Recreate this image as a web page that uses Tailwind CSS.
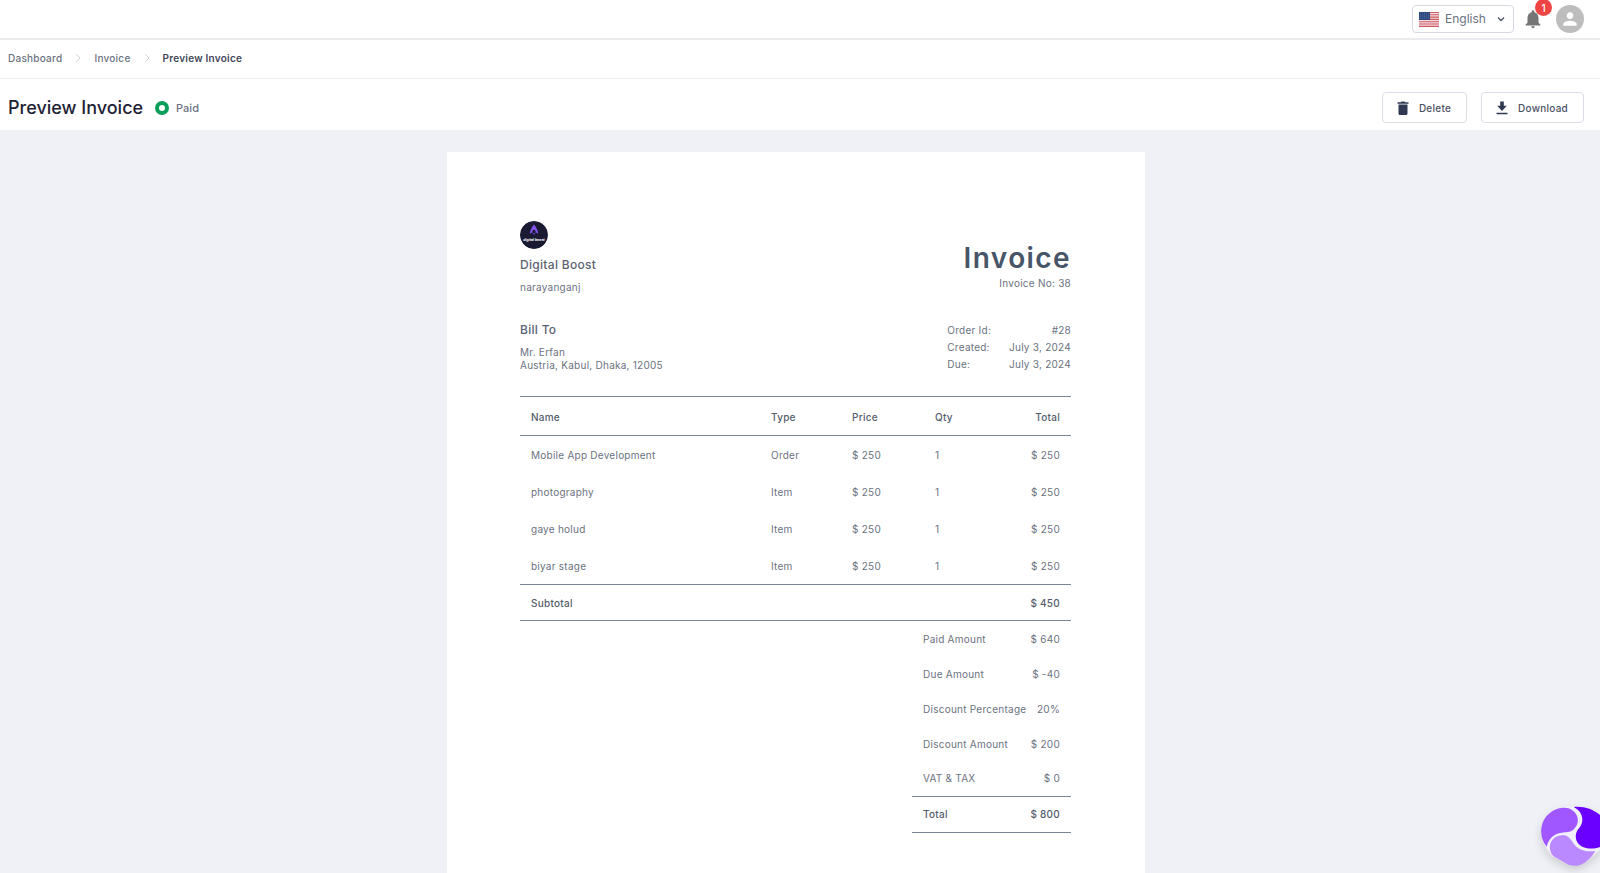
<!DOCTYPE html>
<html lang="en">
  <head>
    <meta charset="UTF-8" />
    <meta name="viewport" content="width=device-width, initial-scale=1.0" />
    <title>Preview Invoice</title>
    <script src="https://cdn.jsdelivr.net/npm/@tailwindcss/browser@4"></script>
  </head>

  <body class="flex min-h-screen flex-col bg-[#f0f1f7] font-['Inter','Liberation_Sans',sans-serif] text-[10px] leading-4 tracking-wide text-[#6b7280]">
    <!-- Top bar -->
    <header class="flex h-10 items-center justify-end border-b-2 border-[#ebebed] bg-white pr-4">
      <div class="flex h-7 items-center rounded border border-[#d5d9e2] pl-1.5 pr-2">
        <svg class="h-[15px] w-5" viewBox="0 0 20 15" aria-hidden="true">
          <rect width="20" height="15" fill="#f3dcdf" />
          <path d="M0 .5h20M0 2.8h20M0 5.1h20M0 7.4h20M0 9.7h20M0 12h20M0 14.4h20" stroke="#cf5a64" stroke-width="1.1" />
          <rect width="11" height="8" fill="#2f4a80" />
          <path d="M1 2h9M1 4h9M1 6h9" stroke="#6b80a8" stroke-width=".6" stroke-dasharray="1 1" />
        </svg>
        <select aria-label="Language" class="ml-1.5 w-[46px] appearance-none bg-transparent text-xs leading-5 tracking-normal text-[#6b7280]">
          <option>English</option>
        </select>
        <svg class="ml-1.5 h-2 w-2" viewBox="0 0 8 8" fill="none" stroke="#4b5563" stroke-width="1.3" aria-hidden="true"><path d="M1 2.5l3 3 3-3" /></svg>
      </div>
      <button type="button" aria-label="Notifications" class="relative ml-2 h-6 w-6">
        <svg viewBox="0 0 24 24" fill="#757575" class="h-[22px] w-[22px]"><path d="M12 22c1.1 0 2-.9 2-2h-4c0 1.100.89 2 2 2zm6-6v-5c0-3.070-1.640-5.640-4.500-6.320V4c0-.83-.67-1.500-1.500-1.500s-1.500.67-1.500 1.500v.68C7.630 5.360 6 7.920 6 11v5l-2 2v1h16v-1l-2-2z" /></svg>
        <span class="absolute -top-2 -right-1.5 flex h-[17px] w-[17px] items-center justify-center rounded-full bg-[#ef4444] leading-none font-medium tracking-normal text-white">1</span>
      </button>
      <button type="button" aria-label="Account" class="ml-2.5 flex h-7 w-7 items-center justify-center rounded-full bg-[#bdbdbd]">
        <svg viewBox="0 0 24 24" fill="#fff" class="h-5 w-5"><path d="M12 12c2.210 0 4-1.790 4-4s-1.790-4-4-4-4 1.790-4 4 1.790 4 4 4zm0 2c-2.670 0-8 1.340-8 4v2h16v-2c0-2.660-5.330-4-8-4z" /></svg>
      </button>
    </header>

    <!-- Breadcrumb -->
    <nav aria-label="Breadcrumb" class="flex h-[39px] items-center border-b border-[#f0f1f5] bg-white px-2 pb-0.5 font-medium">
      <a href="#">Dashboard</a>
      <svg class="mx-3 h-2 w-2" viewBox="0 0 8 8" fill="none" stroke="#cfd3dc" aria-hidden="true"><path d="M2 0l4 4-4 4" /></svg>
      <a href="#">Invoice</a>
      <svg class="mx-3 h-2 w-2" viewBox="0 0 8 8" fill="none" stroke="#cfd3dc" aria-hidden="true"><path d="M2 0l4 4-4 4" /></svg>
      <span class="font-semibold text-[#3f4657]">Preview Invoice</span>
    </nav>

    <!-- Page title and actions -->
    <div class="flex h-[51px] items-center bg-white pl-2 pr-4 pt-1.5">
      <h1 class="text-lg font-medium tracking-normal text-[#1e2235]">Preview Invoice</h1>
      <span class="ml-3 h-3.5 w-3.5 rounded-full border-4 border-[#0a9f5b]"></span>
      <span class="ml-[7px] text-[11px] font-medium tracking-normal">Paid</span>
      <div class="ml-auto flex gap-3.5 font-medium text-[#4b5163]">
        <button type="button" class="flex h-[31px] items-center rounded border border-[#d9dde6] pl-3 pr-[15px]">
          <svg class="mr-2 h-4 w-4" viewBox="0 0 16 16" fill="#2f3a52" aria-hidden="true"><path d="M3.500 4.500h9v9a1.500 1.500 0 0 1-1.500 1.500H5a1.500 1.500 0 0 1-1.500-1.500zM2.500 2.300h3.300L6.500 1.500h3l.7.800h3.300v1.500h-11z" /></svg>
          Delete
        </button>
        <button type="button" class="flex h-[31px] items-center rounded border border-[#d9dde6] pl-3 pr-[15px]">
          <svg class="mr-2 h-4 w-4" viewBox="0 0 16 16" fill="#2f3a52" aria-hidden="true"><path d="M6.200 1.500h3.600v4.300h3L8 11 3.200 5.800h3zM2.500 12.800h11v1.500h-11z" /></svg>
          Download
        </button>
      </div>
    </div>

    <!-- Invoice sheet -->
    <main class="flex flex-1 justify-center pr-2 pt-[22px]">
      <section class="w-full max-w-[698px] bg-white pt-[69px] pr-[74px] pl-[73px]">
        <div class="flex items-end justify-between">
          <div>
            <svg class="h-7 w-7 rounded-full" viewBox="0 0 28 28" role="img" aria-label="Digital Boost logo">
              <circle cx="14" cy="14" r="14" fill="#1b1a33" />
              <path d="M14 3.500c2.200 2.600 3.600 5.500 4.300 9.200l-2.600-1.500c.1-1.300-.6-2.400-1.700-2.400s-1.800 1.100-1.700 2.400l-2.600 1.500C10.400 9 11.800 6.100 14 3.500z" fill="#8455f2" />
              <path d="M12.600 11.500l1.400 2 1.400-2" stroke="#5c3fc0" fill="none" />
              <text x="14" y="19.500" text-anchor="middle" class="tracking-normal" font-family="Inter, sans-serif" font-size="3.500" font-style="italic" font-weight="700" fill="#fff">digital boost</text>
            </svg>
            <h2 class="mt-1.5 text-xs leading-5 font-medium tracking-wide text-[#5b6372]">Digital Boost</h2>
            <p class="mt-1">narayanganj</p>
          </div>
          <div class="mb-1 text-right">
            <h2 class="text-[28px] leading-8 font-semibold tracking-wider text-[#475569]">Invoice</h2>
            <p class="mt-px">Invoice No: 38</p>
          </div>
        </div>

        <div class="mt-[25px] flex items-start justify-between">
          <div>
            <h3 class="text-xs leading-5 font-medium tracking-wide text-[#5b6372]">Bill To</h3>
            <address class="mt-1.5 leading-[13px] not-italic">Mr. Erfan<br />Austria, Kabul, Dhaka, 12005</address>
          </div>
          <dl class="mt-0.5 grid grid-cols-[auto_auto] gap-x-[18px] leading-[17px]">
            <dt>Order Id:</dt><dd class="text-right">#28</dd>
            <dt>Created:</dt><dd class="text-right">July 3, 2024</dd>
            <dt>Due:</dt><dd class="text-right">July 3, 2024</dd>
          </dl>
        </div>

        <table class="mt-[23px] w-full table-fixed text-left">
          <thead>
            <tr class="h-[39px] border-y border-[#7b8698] text-[#555d6c]">
              <th class="px-[11px] pt-0.5 font-medium">Name</th>
              <th class="w-[81px] px-[11px] pt-0.5 font-medium">Type</th>
              <th class="w-[83px] px-[11px] pt-0.5 font-medium">Price</th>
              <th class="w-[81px] px-[11px] pt-0.5 font-medium">Qty</th>
              <th class="w-[66px] px-[11px] pt-0.5 text-right font-medium">Total</th>
            </tr>
          </thead>
          <tbody>
            <tr class="h-[37px]">
              <td class="px-[11px] pt-0.5">Mobile App Development</td>
              <td class="px-[11px] pt-0.5">Order</td>
              <td class="px-[11px] pt-0.5">$ 250</td>
              <td class="px-[11px] pt-0.5">1</td>
              <td class="px-[11px] pt-0.5 text-right">$ 250</td>
            </tr>
            <tr class="h-[37px]">
              <td class="px-[11px] pt-0.5">photography</td>
              <td class="px-[11px] pt-0.5">Item</td>
              <td class="px-[11px] pt-0.5">$ 250</td>
              <td class="px-[11px] pt-0.5">1</td>
              <td class="px-[11px] pt-0.5 text-right">$ 250</td>
            </tr>
            <tr class="h-[37px]">
              <td class="px-[11px] pt-0.5">gaye holud</td>
              <td class="px-[11px] pt-0.5">Item</td>
              <td class="px-[11px] pt-0.5">$ 250</td>
              <td class="px-[11px] pt-0.5">1</td>
              <td class="px-[11px] pt-0.5 text-right">$ 250</td>
            </tr>
            <tr class="h-[38px]">
              <td class="px-[11px] pt-0.5">biyar stage</td>
              <td class="px-[11px] pt-0.5">Item</td>
              <td class="px-[11px] pt-0.5">$ 250</td>
              <td class="px-[11px] pt-0.5">1</td>
              <td class="px-[11px] pt-0.5 text-right">$ 250</td>
            </tr>
          </tbody>
          <tfoot>
            <tr class="h-9 border-y border-[#7b8698] font-medium text-[#555d6c]">
              <th colspan="4" class="px-[11px] font-medium">Subtotal</th>
              <td class="px-[11px] text-right">$ 450</td>
            </tr>
          </tfoot>
        </table>

        <table class="ml-auto w-[159px] text-left whitespace-nowrap">
          <tbody>
            <tr class="h-[35px]"><th class="pl-[11px] font-normal">Paid Amount</th><td class="pr-[11px] text-right">$ 640</td></tr>
            <tr class="h-[35px]"><th class="pl-[11px] font-normal">Due Amount</th><td class="pr-[11px] text-right">$ -40</td></tr>
            <tr class="h-[35px]"><th class="pl-[11px] font-normal">Discount Percentage</th><td class="pr-[11px] text-right">20%</td></tr>
            <tr class="h-[35px]"><th class="pl-[11px] font-normal">Discount Amount</th><td class="pr-[11px] text-right">$ 200</td></tr>
            <tr class="h-[35px]"><th class="pl-[11px] font-normal">VAT &amp; TAX</th><td class="pr-[11px] text-right">$ 0</td></tr>
            <tr class="h-9 border-y border-[#7b8698] font-medium text-[#555d6c]"><th class="pl-[11px] font-medium">Total</th><td class="pr-[11px] text-right">$ 800</td></tr>
          </tbody>
        </table>
      </section>
    </main>

    <!-- Floating assistant button -->
    <button type="button" aria-label="Open assistant" class="fixed right-0 bottom-0 h-20 w-20">
      <svg viewBox="0 0 240 240" class="h-20 w-20 drop-shadow-lg">
        <path d="M105 46C135 36 200 32 250 70v90c-30 30-60 65-105 55L98 190C55 150 50 85 105 46z" fill="#f1f0f8" />
        <path d="M105 50c22-8 42-8 56 5 18 16 16 42-2 56-10 8-20 6-34 8-24 3-40 19-45 42-15-19-20-42-14-64 4-20 18-37 39-47z" fill="#a057ff" />
        <path d="M161 42c36-3 64 9 89 33v82c-20 12-47 13-66 3-20-12-22-38-7-54 17-20 13-50-16-64z" fill="#6a00ff" />
        <path d="M90 166c-2-27 20-42 43-39 19 3 22 22 36 34 16 13 36 16 57 13-12 20-27 35-46 42-12 4-24 3-35-1l-41-23c-9-6-14-15-14-26z" fill="#bb89ff" />
      </svg>
    </button>
  </body>
</html>
